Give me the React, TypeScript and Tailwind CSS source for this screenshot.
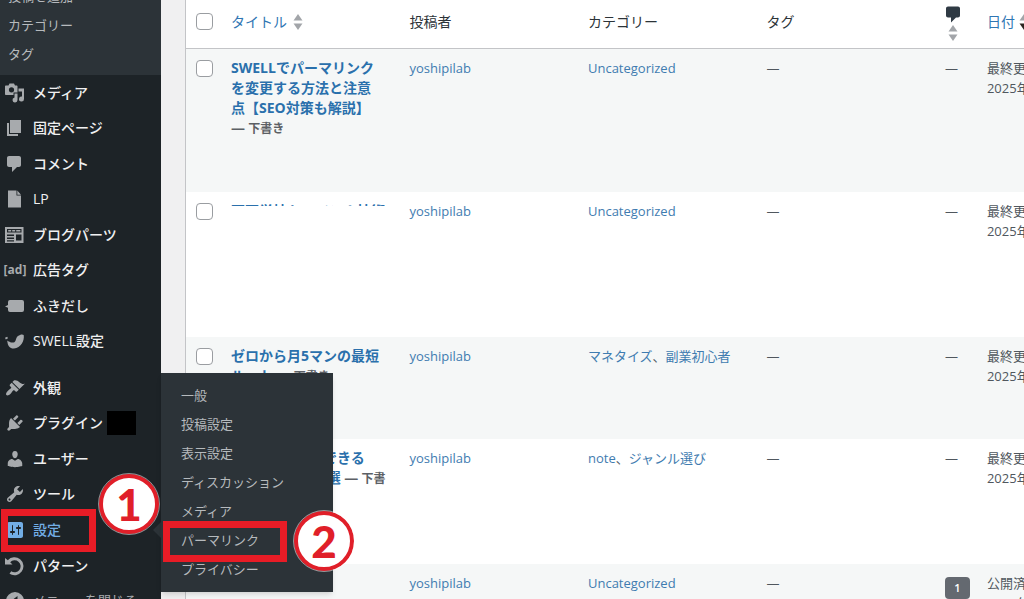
import type { ReactNode } from "react";

type Post = {
  id: string;
  height: string;
  title: ReactNode;
  categories: string[];
  comments?: number;
  date: ReactNode;
};

const Icon = ({ children }: { children: ReactNode }) => (
  <svg viewBox="0 0 20 20" className="size-5 shrink-0 fill-current" aria-hidden="true">
    {children}
  </svg>
);

const icons = {
  media: (
    <path
      fillRule="evenodd"
      d="M12.500 9.500V3.500c0-.55-.45-1-1-1H10L9 .5H4.500L3.500 2.500H1c-.55 0-1 .45-1 1V11c0 .55.45 1 1 1h7.500V9.500zM6.500 4.200a2.600 2.600 0 1 1 0 5.200 2.600 2.600 0 0 1 0-5.200zM13.500 5.500H19V16a2.500 2.500 0 1 1-2-2.450V8.500h-3.500zM9.500 10.500h3V17a2.500 2.500 0 1 1-3-2.450z"
    />
  ),
  pages: <path d="M5 15V2h11v13H5zm-1 1h9v2H2V5h2v11z" />,
  comment: <path d="M4 2h10c1.100 0 2 .9 2 2v7c0 1.100-.9 2-2 2h-2l-5 5v-5H4c-1.100 0-2-.9-2-2V4c0-1.100.9-2 2-2z" />,
  page: <path d="M3 1.500h8.500v5H16v12H3zM12.300 1.500L16 5.700h-3.700z" />,
  blog: (
    <path
      fillRule="evenodd"
      d="M0 2h18.500v16H0zm2 2v3.500h14.500V4zm1.200 1h3v1.600h-3zm4 0h3v1.600h-3zm4 0h4.200v1.600h-4.200zM2 9.500V11h7V9.500zm0 3V14h7v-1.500zm0 2.800v1.200h7v-1.200zM11 9.500v6h5.500v-6z"
    />
  ),
  balloon: <path d="M5 4h12a2 2 0 0 1 2 2v8a2 2 0 0 1-2 2H5a2 2 0 0 1-2-2v-2.300L0 10.500 3 9V6a2 2 0 0 1 2-2z" />,
  swell: (
    <path d="M2 9.500c1.800 1 4 2.500 6.500 2 3-.5 1.800-4.700 4.500-6.500C15 3.500 17.500 3 18.700 4c1 6-3 13-9.700 13.500C5 17.800 3 14.500 2.700 12.500c-.2-1.300-.2-1.800-.7-3zM0 6.700l2.200-.9.800 1.500L.8 8.500z" />
  ),
  brush: (
    <path d="M14.480 11.060 7.410 3.990l1.500-1.500c.5-.56 2.300-.47 3.510.32 1.210.8 1.430 1.280 2.910 2.100 1.180.64 2.450 1.260 4.450.85zm-.71.71L6.700 4.700 4.930 6.470c-.39.39-.39 1.020 0 1.410l1.060 1.060c.39.39.39 1.030 0 1.420-.6.6-1.430 1.110-2.210 1.690-.35.26-.7.53-1.010.84C1.430 14.230.4 16.080 1.400 17.070c.99 1 2.840-.03 4.180-1.360.31-.31.58-.66.85-1.020.57-.78 1.080-1.610 1.690-2.210.39-.39 1.020-.39 1.410 0l1.060 1.060c.39.39 1.020.39 1.410 0z" />
  ),
  plug: (
    <path d="M13.110 4.360 9.870 7.600 8 5.730l3.240-3.240c.35-.34 1.050-.2 1.560.32.52.51.66 1.210.31 1.550zm-8 1.770.91-1.120 9.010 9.010-1.190.84c-.71.71-2.630 1.160-3.820 1.160H6.140L4.900 17.260c-.59.59-1.540.59-2.120 0-.59-.58-.59-1.530 0-2.120l1.240-1.240v-3.880c0-1.130.4-3.190 1.090-3.890zm7.260 3.970 3.240-3.240c.34-.35 1.040-.21 1.550.31.52.51.66 1.210.31 1.550l-3.240 3.250z" />
  ),
  user: (
    <path d="M10 9.250c-2.270 0-2.730-3.440-2.730-3.440C7 4.020 7.820 2 9.970 2c2.160 0 2.980 2.020 2.710 3.810 0 0-.41 3.440-2.680 3.440zm0 2.570L12.720 10c2.390 0 4.520 2.330 4.520 4.530v2.490s-3.650 1.130-7.240 1.130c-3.650 0-7.240-1.130-7.240-1.130v-2.490c0-2.250 1.940-4.480 4.470-4.480z" />
  ),
  tools: (
    <path d="M16.680 9.770c-1.340 1.340-3.300 1.670-4.950.99l-5.410 6.520c-.99.99-2.590.99-3.580 0s-.99-2.590 0-3.570l6.520-5.420c-.68-1.650-.35-3.610.99-4.950 1.280-1.280 3.120-1.620 4.720-1.060l-2.890 2.890 2.820 2.820 2.860-2.870c.53 1.580.18 3.390-1.080 4.650zM3.810 16.210c.4.390 1.040.39 1.430 0 .4-.4.4-1.040 0-1.430-.39-.4-1.030-.4-1.430 0-.39.39-.39 1.030 0 1.430z" />
  ),
  settings: (
    <path
      fillRule="evenodd"
      d="M18 16V4c0-1.100-.9-2-2-2H4c-1.100 0-2 .9-2 2v12c0 1.100.9 2 2 2h12c1.100 0 2-.9 2-2zM8 11h1c.55 0 1 .45 1 1s-.45 1-1 1H8v1.500c0 .28-.22.5-.5.5s-.5-.22-.5-.5V13H6c-.55 0-1-.45-1-1s.45-1 1-1h1V5.500c0-.28.22-.5.5-.5s.5.22.5.5zm5-2h-1c-.55 0-1-.45-1-1s.45-1 1-1h1V5.500c0-.28.22-.5.5-.5s.5.22.5.5V7h1c.55 0 1 .45 1 1s-.45 1-1 1h-1v5.500c0 .28-.22.5-.5.5s-.5-.22-.5-.5z"
    />
  ),
  pattern: (
    <path d="M0 2l2.800 2.200A9 9 0 1 1 4.500 17.800l1.700-2.600A6 6 0 1 0 5.200 6.200L7.500 8.500H0z" />
  ),
  collapse: (
    <path fillRule="evenodd" d="M10 1a9 9 0 1 1 0 18 9 9 0 0 1 0-18zm2.500 4L6 10l6.500 5z" />
  ),
};

const AdMark = () => (
  <span className="flex w-5 shrink-0 justify-center text-xs leading-5 font-bold whitespace-nowrap" aria-hidden="true">
    [ad]
  </span>
);

const contentMenu: { label: string; icon: ReactNode }[] = [
  { label: "メディア", icon: <Icon>{icons.media}</Icon> },
  { label: "固定ページ", icon: <Icon>{icons.pages}</Icon> },
  { label: "コメント", icon: <Icon>{icons.comment}</Icon> },
  { label: "LP", icon: <Icon>{icons.page}</Icon> },
  { label: "ブログパーツ", icon: <Icon>{icons.blog}</Icon> },
  { label: "広告タグ", icon: <AdMark /> },
  { label: "ふきだし", icon: <Icon>{icons.balloon}</Icon> },
  { label: "SWELL設定", icon: <Icon>{icons.swell}</Icon> },
];

const adminMenu: { label: string; icon: ReactNode }[] = [
  { label: "外観", icon: <Icon>{icons.brush}</Icon> },
  { label: "プラグイン", icon: <Icon>{icons.plug}</Icon> },
  { label: "ユーザー", icon: <Icon>{icons.user}</Icon> },
  { label: "ツール", icon: <Icon>{icons.tools}</Icon> },
  { label: "設定", icon: <Icon>{icons.settings}</Icon> },
  { label: "パターン", icon: <Icon>{icons.pattern}</Icon> },
];

const settingsMenu = ["一般", "投稿設定", "表示設定", "ディスカッション", "メディア", "パーマリンク", "プライバシー"];

const Draft = ({ text = "下書き" }: { text?: string }) => (
  <span className="text-xs font-bold text-[#5c6065]">
    <span className="text-sm">—</span> {text}
  </span>
);

const updated = (
  <>
    最終更新日
    <br />
    2025年5月
  </>
);

const posts: Post[] = [
  {
    id: "permalink",
    height: "h-36",
    title: (
      <>
        <a href="#permalink">
          SWELLでパーマリンク
          <br />
          を変更する方法と注意
          <br />
          点【SEO対策も解説】
        </a>
        <br />
        <Draft />
      </>
    ),
    categories: ["Uncategorized"],
    date: updated,
  },
  {
    id: "hidden",
    height: "h-[145px]",
    title: (
      <div className="h-[5px] overflow-hidden">
        <a href="#hidden">百百学校トーベン！技術</a>
      </div>
    ),
    categories: ["Uncategorized"],
    date: updated,
  },
  {
    id: "route",
    height: "h-[102px]",
    title: (
      <>
        <a href="#route">
          ゼロから月5マンの最短
          <br />
          ルート
        </a>{" "}
        <Draft />
      </>
    ),
    categories: ["マネタイズ", "副業初心者"],
    date: updated,
  },
  {
    id: "genre",
    height: "h-[125px]",
    title: (
      <>
        <a href="#genre">
          初心者でも月1できる
          <br />
          おすすめ副業 5選
        </a>{" "}
        <Draft text="下書" />
      </>
    ),
    categories: ["note", "ジャンル選び"],
    date: updated,
  },
  {
    id: "published",
    height: "h-36",
    title: null,
    categories: ["Uncategorized"],
    comments: 1,
    date: (
      <>
        公開済み
        <br />
        2025年5月
      </>
    ),
  },
];

const Sorter = ({ dark = false }: { dark?: boolean }) => (
  <svg viewBox="0 0 10 16" className="h-4 w-2.5 shrink-0" aria-hidden="true">
    <path d="M5 0l4.500 6.500h-9z" fill="#a2a5a9" />
    <path d="M5 16L.5 9.500h9z" fill={dark ? "#2c2420" : "#a2a5a9"} />
  </svg>
);

const Check = ({ label }: { label: string }) => (
  <input
    type="checkbox"
    aria-label={label}
    className="block size-[17px] appearance-none rounded border border-[#9a9da1] bg-white"
  />
);

const Step = ({ n }: { n: number }) => (
  <span className="flex size-[60px] items-center justify-center rounded-full border-4 border-[#e01f29] bg-white font-[Lato,sans-serif] text-[44px] leading-none font-black text-[#e01f29] outline outline-white/50">
    {n}
  </span>
);

const MenuLink = ({ label, icon, active = false }: { label: string; icon: ReactNode; active?: boolean }) => (
  <a
    href={`#${label}`}
    className={`flex h-full items-center gap-2 pl-[5px] text-sm font-medium whitespace-nowrap ${active ? "text-[#72aee6]" : "text-[#a7aaad]"}`}
  >
    {icon}
    <span className={active ? "" : "text-[#f0f0f1]"}>{label}</span>
    {label === "プラグイン" && <span className="-ml-1 h-6 w-[29px] bg-black" />}
  </a>
);

export default function App() {
  return (
    <div className="flex h-screen overflow-hidden bg-[#f0f0f1] font-['Open_Sans','Noto_Sans_CJK_JP',sans-serif]">
      <nav aria-label="管理メニュー" className="relative z-10 w-[161px] shrink-0 bg-[#1d2327]">
        <ul className="flex h-[75px] flex-col justify-end bg-[#2c3338] pb-1.5 pl-2 text-[13px] text-[#b6babd]">
          {["投稿を追加", "カテゴリー", "タグ"].map((label) => (
            <li key={label} className="h-[29px] shrink-0 leading-[29px]">
              <a href={`#${label}`}>{label}</a>
            </li>
          ))}
        </ul>
        <ul className="grid h-[284px] auto-rows-fr">
          {contentMenu.map((item) => (
            <li key={item.label}>
              <MenuLink {...item} />
            </li>
          ))}
        </ul>
        <ul className="mt-[11px] grid h-[249px] auto-rows-fr">
          {adminMenu.map((item) =>
            item.label === "設定" ? (
              <li key={item.label} className="relative">
                <MenuLink {...item} active />
                <span className="absolute top-1/2 right-0 -mt-2 border-y-8 border-r-8 border-y-transparent border-r-[#2c3338]" />
                <span className="absolute -top-[3px] left-px h-[43px] w-[95px] border-[7px] border-[#e81c26]" />
                <div className="absolute -top-[38px] left-[99px]">
                  <Step n={1} />
                </div>
                <ul className="absolute -top-[139px] left-full w-[172px] bg-[#2c3338] py-2 text-[13px] text-[#b6babd] shadow-md">
                  {settingsMenu.map((label) => (
                    <li key={label} className="relative h-[29px] pl-5 leading-[29px]">
                      <a href={`#${label}`}>{label}</a>
                      {label === "パーマリンク" && (
                        <>
                          <span className="absolute -top-[5px] left-0.5 h-[41px] w-[124px] border-[7px] border-[#e81c26]" />
                          <div className="absolute -top-[15px] left-[133px]">
                            <Step n={2} />
                          </div>
                        </>
                      )}
                    </li>
                  ))}
                </ul>
              </li>
            ) : (
              <li key={item.label}>
                <MenuLink {...item} />
              </li>
            ),
          )}
          <li>
            <button type="button" className="flex h-full items-center gap-2 pl-[5px] text-[13px] text-[#a7aaad]">
              <Icon>{icons.collapse}</Icon>
              メニューを閉じる
            </button>
          </li>
        </ul>
      </nav>

      <main className="ml-6 min-w-0 flex-1 overflow-hidden border-l border-[#c3c4c7] bg-white">
        <table className="w-full table-fixed border-collapse text-left text-[13px] leading-5 whitespace-nowrap text-[#50575e]">
          <colgroup>
            <col className="w-[45px]" />
            <col className="w-[21.3%]" />
            <col className="w-[21.3%]" />
            <col className="w-[21.3%]" />
            <col className="w-[21.3%]" />
            <col className="w-[42px]" />
            <col />
          </colgroup>
          <thead>
            <tr className="h-12 border-b border-[#c3c4c7] text-sm text-[#2c3338]">
              <th className="pt-0 pb-1 pl-2.5">
                <Check label="すべて選択" />
              </th>
              <th className="pb-1 font-normal">
                <a href="#sort-title" className="flex items-center gap-1.5 text-[#2f76b3]">
                  タイトル
                  <Sorter />
                </a>
              </th>
              <th className="pb-1 font-normal">投稿者</th>
              <th className="pb-1 font-normal">カテゴリー</th>
              <th className="pb-1 font-normal">タグ</th>
              <th className="font-normal">
                <a href="#sort-comments" aria-label="コメント" className="flex w-4 flex-col items-center">
                  <svg viewBox="2 2 14 16" className="h-[17px] w-3.5 fill-[#2f3a44]" aria-hidden="true">
                    {icons.comment}
                  </svg>
                  <span className="mt-0.5">
                    <Sorter />
                  </span>
                </a>
              </th>
              <th className="pb-1 font-normal">
                <a href="#sort-date" className="flex items-center gap-1 text-[#2f76b3]">
                  日付
                  <Sorter dark />
                </a>
              </th>
            </tr>
          </thead>
          <tbody>
            {posts.map((post) => (
              <tr key={post.id} className={`${post.height} align-top odd:bg-[#f5f7f7]`}>
                <td className="pt-[11px] pl-2.5">
                  <Check label="投稿を選択" />
                </td>
                <td className="pt-[9px] text-sm leading-5 font-bold text-[#2a70ac]">{post.title}</td>
                <td className="pt-[9px]">
                  <a href="#author" className="text-[#3f7cb0]">
                    yoshipilab
                  </a>
                </td>
                <td className="pt-[9px]">
                  {post.categories.map((name, i) => (
                    <span key={name}>
                      {i > 0 && "、"}
                      <a href={`#${name}`} className="text-[#3f7cb0]">
                        {name}
                      </a>
                    </span>
                  ))}
                </td>
                <td className="pt-[9px]">—</td>
                <td className="pt-[9px]">
                  {post.comments ? (
                    <a
                      href="#comments"
                      className="mt-1 block h-[22px] w-[25px] rounded bg-[#646970] text-center text-[11px] leading-[22px] font-semibold text-white"
                    >
                      {post.comments}
                    </a>
                  ) : (
                    "—"
                  )}
                </td>
                <td className="overflow-hidden pt-[9px]">{post.date}</td>
              </tr>
            ))}
          </tbody>
        </table>
      </main>
    </div>
  );
}
